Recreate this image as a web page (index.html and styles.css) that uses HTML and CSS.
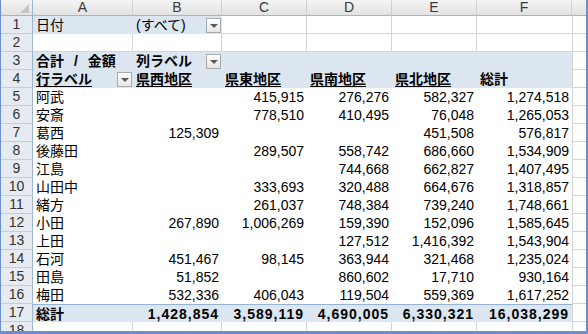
FILE: index.html
```html
<!DOCTYPE html>
<html lang="ja">
<head>
<meta charset="utf-8">
<title>Pivot</title>
<link rel="stylesheet" href="styles.css">
</head>
<body>
<div class="sheet">
  <div class="row hdr">
    <div class="corner"><span class="tri"></span></div>
    <div class="ch">A</div><div class="ch">B</div><div class="ch">C</div><div class="ch">D</div><div class="ch">E</div><div class="ch">F</div><div class="ch last"></div>
  </div>
  <div class="row">
    <div class="rh">1</div>
    <div class="c p">日付</div>
    <div class="c p"><span>(すべて)</span><span class="dd"></span></div>
    <div class="c g"></div><div class="c g"></div><div class="c g"></div><div class="c gf"></div><div class="c gx"></div>
  </div>
  <div class="row">
    <div class="rh">2</div>
    <div class="c g"></div><div class="c g"></div><div class="c g"></div><div class="c g"></div><div class="c g"></div><div class="c gf"></div><div class="c gx"></div>
  </div>
  <div class="row">
    <div class="rh">3</div>
    <div class="c p b ws">合計 / 金額</div>
    <div class="c p b"><span>列ラベル</span><span class="dd"></span></div>
    <div class="c p"></div><div class="c p"></div><div class="c p"></div><div class="c p"></div><div class="c gx"></div>
  </div>
  <div class="row">
    <div class="rh">4</div>
    <div class="c p b"><span class="u">行ラベル</span><span class="dd"></span></div>
    <div class="c p b"><span class="u">県西地区</span></div>
    <div class="c p b"><span class="u">県東地区</span></div>
    <div class="c p b"><span class="u">県南地区</span></div>
    <div class="c p b"><span class="u">県北地区</span></div>
    <div class="c p b">総計</div>
    <div class="c gx"></div>
  </div>
  <div class="row"><div class="rh">5</div><div class="c">阿武</div><div class="c n"></div><div class="c n">415,915</div><div class="c n">276,276</div><div class="c n">582,327</div><div class="c n">1,274,518</div><div class="c gx"></div></div>
  <div class="row"><div class="rh">6</div><div class="c">安斎</div><div class="c n"></div><div class="c n">778,510</div><div class="c n">410,495</div><div class="c n">76,048</div><div class="c n">1,265,053</div><div class="c gx"></div></div>
  <div class="row"><div class="rh">7</div><div class="c">葛西</div><div class="c n">125,309</div><div class="c n"></div><div class="c n"></div><div class="c n">451,508</div><div class="c n">576,817</div><div class="c gx"></div></div>
  <div class="row"><div class="rh">8</div><div class="c">後藤田</div><div class="c n"></div><div class="c n">289,507</div><div class="c n">558,742</div><div class="c n">686,660</div><div class="c n">1,534,909</div><div class="c gx"></div></div>
  <div class="row"><div class="rh">9</div><div class="c">江島</div><div class="c n"></div><div class="c n"></div><div class="c n">744,668</div><div class="c n">662,827</div><div class="c n">1,407,495</div><div class="c gx"></div></div>
  <div class="row"><div class="rh">10</div><div class="c">山田中</div><div class="c n"></div><div class="c n">333,693</div><div class="c n">320,488</div><div class="c n">664,676</div><div class="c n">1,318,857</div><div class="c gx"></div></div>
  <div class="row"><div class="rh">11</div><div class="c">緒方</div><div class="c n"></div><div class="c n">261,037</div><div class="c n">748,384</div><div class="c n">739,240</div><div class="c n">1,748,661</div><div class="c gx"></div></div>
  <div class="row"><div class="rh">12</div><div class="c">小田</div><div class="c n">267,890</div><div class="c n">1,006,269</div><div class="c n">159,390</div><div class="c n">152,096</div><div class="c n">1,585,645</div><div class="c gx"></div></div>
  <div class="row"><div class="rh">13</div><div class="c">上田</div><div class="c n"></div><div class="c n"></div><div class="c n">127,512</div><div class="c n">1,416,392</div><div class="c n">1,543,904</div><div class="c gx"></div></div>
  <div class="row"><div class="rh">14</div><div class="c">石河</div><div class="c n">451,467</div><div class="c n">98,145</div><div class="c n">363,944</div><div class="c n">321,468</div><div class="c n">1,235,024</div><div class="c gx"></div></div>
  <div class="row"><div class="rh">15</div><div class="c">田島</div><div class="c n">51,852</div><div class="c n"></div><div class="c n">860,602</div><div class="c n">17,710</div><div class="c n">930,164</div><div class="c gx"></div></div>
  <div class="row"><div class="rh">16</div><div class="c">梅田</div><div class="c n">532,336</div><div class="c n">406,043</div><div class="c n">119,504</div><div class="c n">559,369</div><div class="c n">1,617,252</div><div class="c gx"></div></div>
  <div class="row"><div class="rh">17</div><div class="c p b tot">総計</div><div class="c p b n tot">1,428,854</div><div class="c p b n tot">3,589,119</div><div class="c p b n tot">4,690,005</div><div class="c p b n tot">6,330,321</div><div class="c p b n tot">16,038,299</div><div class="c gx"></div></div>
  <div class="row">
    <div class="rh">18</div>
    <div class="c g"></div><div class="c g"></div><div class="c g"></div><div class="c g"></div><div class="c g"></div><div class="c gf"></div><div class="c gx"></div>
  </div>
</div>
</body>
</html>
```
FILE: styles.css
```css
html, body {
  margin: 0;
  padding: 0;
  background: #fff;
}
.sheet {
  width: 588px;
  height: 334px;
  box-sizing: border-box;
  border-left: 1px solid #6b8fc6;
  border-right: 2px solid #6b8fc6;
  border-bottom: 3px solid #6b8fc6;
  overflow: hidden;
  background: #fff;
  font-family: "Liberation Sans", "Noto Sans CJK JP", sans-serif;
  font-size: 14px;
  color: #000;
}
.row {
  display: grid;
  grid-template-columns: 32px 100px 89px 85px 85px 85px 95px 14px;
  height: 18px;
}
.row.hdr {
  height: 16px;
}
.corner {
  display: flex;
  justify-content: flex-end;
  align-items: flex-end;
  padding: 0 3px 2px 0;
  box-sizing: border-box;
  background: linear-gradient(#f4f4f4, #e2e2e2);
  border-right: 1px solid #9eb6ce;
  border-bottom: 1px solid #9eb6ce;
}
.tri {
  width: 0;
  height: 0;
  border-left: 9px solid transparent;
  border-bottom: 9px solid #c6c6c6;
}
.ch {
  box-sizing: border-box;
  background: linear-gradient(#f4f4f4, #e3e3e3);
  border-right: 1px solid #cfcfcf;
  border-bottom: 1px solid #9eb6ce;
  text-align: center;
  line-height: 15px;
  color: #3a3a3a;
  font-size: 14px;
}
.ch.last {
  border-right: none;
}
.rh {
  box-sizing: border-box;
  background: #e6ebf2;
  border-right: 1px solid #9eb6ce;
  border-bottom: 1px solid #c3cedb;
  text-align: center;
  line-height: 17px;
  color: #333;
}
.c {
  display: flex;
  align-items: center;
  box-sizing: border-box;
  padding: 0 3px;
  white-space: nowrap;
  overflow: hidden;
  line-height: 18px;
}
.n {
  justify-content: flex-end;
}
.g {
  border-right: 1px solid #d4d4d4;
  border-bottom: 1px solid #d4d4d4;
}
.gf {
  border-bottom: 1px solid #d4d4d4;
}
.gx {
  border-left: 1px solid #d4d4d4;
  border-bottom: 1px solid #d4d4d4;
}
.p {
  background: #dce6f1;
}
.b {
  font-weight: bold;
}
.ws {
  word-spacing: 6px;
}
.u {
  text-decoration: underline;
  text-underline-offset: 2px;
}
.tot {
  border-top: 1px solid #95b3d7;
}
.tot.n {
  letter-spacing: 1px;
}
.dd {
  margin-left: auto;
  margin-right: -2px;
  width: 15px;
  height: 15px;
  box-sizing: border-box;
  border: 1px solid #a8a8a8;
  background: linear-gradient(#ffffff, #e6e6e6);
  display: flex;
  justify-content: center;
  align-items: center;
}
.dd::after {
  content: "";
  width: 0;
  height: 0;
  border-left: 4px solid transparent;
  border-right: 4px solid transparent;
  border-top: 4px solid #5a5a5a;
  margin-top: 1px;
}
```
